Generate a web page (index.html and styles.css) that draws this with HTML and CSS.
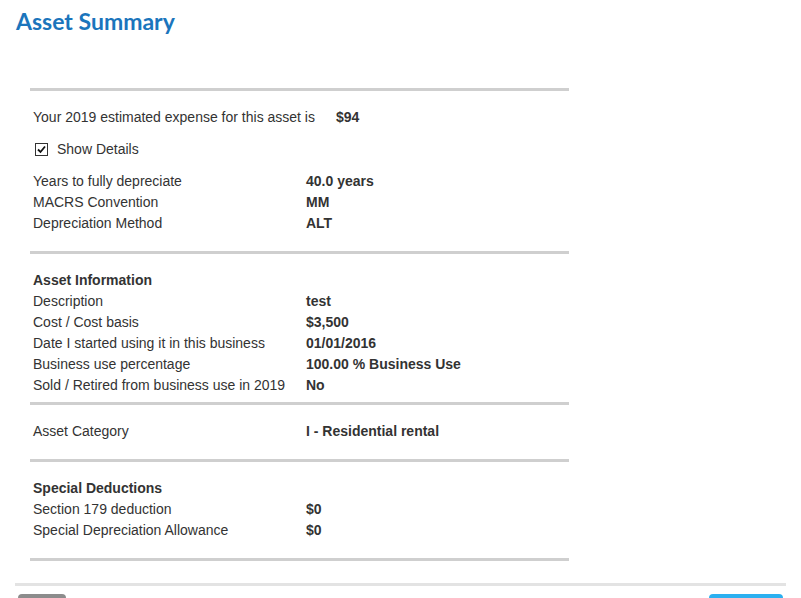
FILE: index.html
```html
<!doctype html>
<html lang=en>
  <head>
    <meta charset=utf-8>
    <title>Asset Summary</title>
    <link rel="stylesheet" href="styles.css">
  </head>
  <body>
<h1 class="page-title">Asset Summary</h1>
<div class="summary">
  <section class="block">
    <div class="estimate">
      <span class="estimate-label">Your 2019 estimated expense for this asset is</span>
      <b>$94</b>
    </div>
    <label class="details-toggle">
      <span class="check"><svg width="11" height="11" viewBox="0 0 11 11"><path d="M2 5.5 L4.5 8 L9 2.5" fill="none" stroke="#111" stroke-width="1.8"/></svg></span>
      Show Details
    </label>
    <dl class="rows">
      <dt>Years to fully depreciate</dt><dd>40.0 years</dd>
      <dt>MACRS Convention</dt><dd>MM</dd>
      <dt>Depreciation Method</dt><dd>ALT</dd>
    </dl>
  </section>
  <section class="block block-tight">
    <h2 class="block-title">Asset Information</h2>
    <dl class="rows">
      <dt>Description</dt><dd>test</dd>
      <dt>Cost / Cost basis</dt><dd>$3,500</dd>
      <dt>Date I started using it in this business</dt><dd>01/01/2016</dd>
      <dt>Business use percentage</dt><dd>100.00 % Business Use</dd>
      <dt>Sold / Retired from business use in 2019</dt><dd>No</dd>
    </dl>
  </section>
  <section class="block">
    <dl class="rows">
      <dt>Asset Category</dt><dd>I - Residential rental</dd>
    </dl>
  </section>
  <section class="block">
    <h2 class="block-title">Special Deductions</h2>
    <dl class="rows">
      <dt>Section 179 deduction</dt><dd>$0</dd>
      <dt>Special Depreciation Allowance</dt><dd>$0</dd>
    </dl>
  </section>
</div>
<div class="actions">
  <button class="btn btn-back">Back</button>
  <button class="btn btn-next">Continue</button>
</div>
  </body>
</html>
```

FILE: styles.css
```css
html, body {
  margin: 0;
  background: #fff;
}
* {
  box-sizing: border-box;
}
body {
  font-family: "Liberation Sans", Arial, sans-serif;
  font-size: 14px;
  line-height: 21px;
  color: #333;
}

.page-title {
  margin: 0;
  padding: 7px 0 0 16px;
  height: 88px;
  font-family: "Lato", "Open Sans", sans-serif;
  font-weight: 700;
  font-size: 23px;
  line-height: 28px;
  color: #1b75bc;
}

.summary {
  width: 539px;
  margin-left: 30px;
  border-bottom: 3px solid #cfcfcf;
}

.block {
  border-top: 3px solid #cfcfcf;
  padding: 16px 3px 17px;
}
.block-tight {
  padding-bottom: 6px;
}

.estimate b {
  margin-left: 17px;
}

.details-toggle {
  display: flex;
  align-items: center;
  margin-top: 11px;
  margin-bottom: 11px;
  padding-left: 2px;
}
.check {
  width: 13px;
  height: 13px;
  border: 1px solid #333;
  margin-right: 9px;
  display: flex;
  align-items: center;
  justify-content: center;
}

.block-title {
  margin: 0;
  font-size: 14px;
  line-height: 21px;
  font-weight: 700;
}

.rows {
  margin: 0;
  display: grid;
  grid-template-columns: 273px 1fr;
}
.rows dt, .rows dd {
  margin: 0;
}
.rows dd {
  font-weight: 700;
}

.actions {
  margin: 22px 15px 0;
  border-top: 3px solid #e3e3e3;
  padding: 8px 3px 0;
  display: flex;
  justify-content: space-between;
}
.btn {
  border: 0;
  border-radius: 4px;
  height: 34px;
  font-family: inherit;
  font-size: 14px;
  color: #fff;
}
.btn-back {
  width: 48px;
  background: #8c8c8c;
}
.btn-next {
  width: 74px;
  background: #2bb0f0;
}
```
